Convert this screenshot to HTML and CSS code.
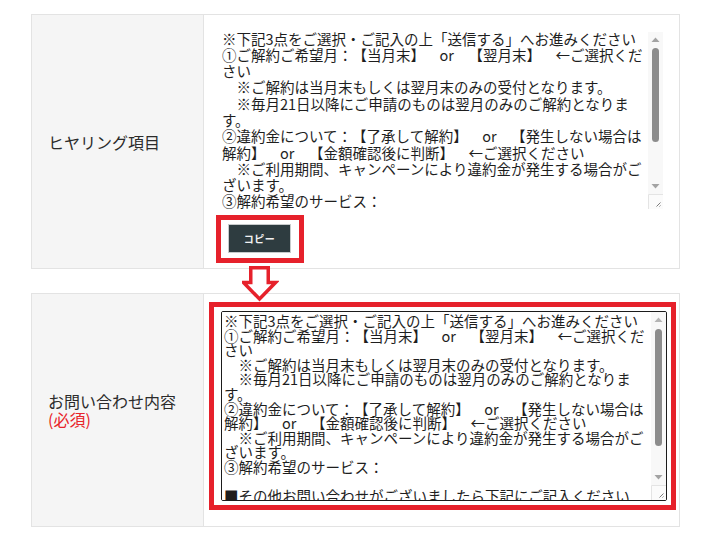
FILE: index.html
```html
<!DOCTYPE html>
<html lang="ja">
<head>
<meta charset="utf-8">
<title>お問い合わせ</title>
<link rel="stylesheet" href="styles.css">
</head>
<body>
<div class="page">
  <div class="form-row row-hearing">
    <div class="label-cell"><span class="label-text">ヒヤリング項目</span></div>
    <div class="value-cell">
      <div class="field field-source">
        <textarea class="ta ta-source" readonly>※下記3点をご選択・ご記入の上「送信する」へお進みください
①ご解約ご希望月：【当月末】　or　【翌月末】　←ご選択くだ
さい
　※ご解約は当月末もしくは翌月末のみの受付となります。
　※毎月21日以降にご申請のものは翌月のみのご解約となりま
す。
②違約金について：【了承して解約】　or　【発生しない場合は
解約】　or　【金額確認後に判断】　←ご選択ください
　※ご利用期間、キャンペーンにより違約金が発生する場合がご
ざいます。
③解約希望のサービス：

■その他お問い合わせがございましたら下記にご記入ください
</textarea>
        <div class="vscroll" aria-hidden="true">
          <span class="sb-btn"><svg width="15" height="15" viewBox="0 0 15 15"><path d="M3.5 10H11.5L7.5 5.5Z" fill="#a3a3a3"/></svg></span>
          <span class="sb-track"><span class="sb-thumb thumb-source"></span></span>
          <span class="sb-btn"><svg width="15" height="15" viewBox="0 0 15 15"><path d="M3.5 5H11.5L7.5 9.5Z" fill="#a3a3a3"/></svg></span>
          <span class="sb-corner"><svg width="15" height="15" viewBox="0 0 15 15"><path d="M0.5 15V0.5H15" fill="none" stroke="#e4e4e4"/><path d="M12.5 8.5L8.5 12.5M12.5 11.5L11.5 12.5" stroke="#7c7c7c" fill="none"/></svg></span>
        </div>
      </div>
      <div class="mark mark-button"><button class="copy-btn" type="button">コピー</button></div>
    </div>
  </div>

  <div class="form-row row-inquiry">
    <div class="label-cell">
      <div class="label-stack">
        <span class="label-text">お問い合わせ内容</span>
        <span class="req">(必須)</span>
      </div>
    </div>
    <div class="value-cell">
      <div class="mark mark-field">
        <div class="field field-target">
          <textarea class="ta ta-target">※下記3点をご選択・ご記入の上「送信する」へお進みください
①ご解約ご希望月：【当月末】　or　【翌月末】　←ご選択くだ
さい
　※ご解約は当月末もしくは翌月末のみの受付となります。
　※毎月21日以降にご申請のものは翌月のみのご解約となりま
す。
②違約金について：【了承して解約】　or　【発生しない場合は
解約】　or　【金額確認後に判断】　←ご選択ください
　※ご利用期間、キャンペーンにより違約金が発生する場合がご
ざいます。
③解約希望のサービス：

■その他お問い合わせがございましたら下記にご記入ください
</textarea>
          <div class="vscroll" aria-hidden="true">
            <span class="sb-btn"><svg width="15" height="15" viewBox="0 0 15 15"><path d="M3.5 10H11.5L7.5 5.5Z" fill="#b4b4b4"/></svg></span>
            <span class="sb-track"><span class="sb-thumb thumb-target"></span></span>
            <span class="sb-btn"><svg width="15" height="15" viewBox="0 0 15 15"><path d="M3.5 5H11.5L7.5 9.5Z" fill="#a3a3a3"/></svg></span>
            <span class="sb-corner"><svg width="15" height="15" viewBox="0 0 15 15"><path d="M0.5 15V0.5H15" fill="none" stroke="#e4e4e4"/><path d="M12.5 8.5L8.5 12.5M12.5 11.5L11.5 12.5" stroke="#7c7c7c" fill="none"/></svg></span>
          </div>
        </div>
      </div>
    </div>
  </div>

  <svg class="down-arrow" width="37" height="37" viewBox="0 0 37 37" aria-hidden="true">
    <polygon points="8.75,1.75 26.25,1.75 26.25,16.5 33.5,16.5 17.5,33 1.5,16.5 8.75,16.5" fill="#ffffff" stroke="#e6212b" stroke-width="3.5" stroke-linejoin="miter"/>
  </svg>
</div>
</body>
</html>
```

FILE: styles.css
```css
html, body {
  margin: 0;
  padding: 0;
  background: #ffffff;
}

.page {
  position: relative;
  padding: 14px 0 0 31px;
  font-family: "Noto Sans CJK JP", "Noto Sans", sans-serif;
  color: #2b2b2b;
  text-spacing-trim: space-all;
}

.form-row {
  display: grid;
  grid-template-columns: 172px 475px;
  width: 649px;
  box-sizing: border-box;
  border: 1px solid #e3e3e3;
}

.row-inquiry {
  margin-top: 24px;
}

.label-cell {
  display: flex;
  align-items: center;
  padding-left: 16px;
  background: #f5f5f5;
  border-right: 1px solid #e3e3e3;
  font-size: 16px;
  line-height: 18px;
}

.label-stack {
  display: flex;
  flex-direction: column;
}

.req {
  color: #e8242a;
}

.row-hearing .value-cell {
  padding: 17px 0 5px 12px;
}

.row-inquiry .value-cell {
  padding: 8px 0 16px 5px;
}

.mark {
  width: fit-content;
  border: 5px solid #e6212b;
}

.mark-button {
  margin-top: 6px;
  padding: 4px 8px 5px 7px;
}

.mark-field {
  padding: 4px 4px 4px 7px;
}

.copy-btn {
  display: block;
  width: 63px;
  height: 29px;
  padding: 0;
  margin: 0;
  background: #2e3c40;
  border: 1px solid #c7cbcc;
  color: #f2f2f2;
  font-family: "Noto Sans CJK JP", sans-serif;
  font-size: 10px;
  font-weight: 700;
  letter-spacing: 0.5px;
}

/* textarea + drawn scrollbar */
.field {
  display: flex;
  box-sizing: border-box;
  overflow: hidden;
  background: #ffffff;
}

.field-source {
  margin-left: 4px;
  width: 443px;
  height: 177px;
}

.field-target {
  width: 446px;
  height: 190px;
  border: 1px solid #1b1b1b;
  border-radius: 2px;
}

.ta {
  display: block;
  flex: 1;
  min-width: 0;
  box-sizing: border-box;
  margin: 0;
  border: 0;
  font-family: "Noto Sans CJK JP", "Noto Sans", sans-serif;
  font-size: 14.5px;
  color: #1e1e1e;
  background: #ffffff;
  overflow: hidden;
  outline: none;
  resize: none;
  text-spacing-trim: space-all;
}

.ta-source {
  margin-top: -1.5px;
  height: calc(100% + 1.5px);
  padding: 0 2px;
  line-height: 16.3px;
}

.ta-target {
  height: 100%;
  padding: 2px 2px 0 2px;
  line-height: 14.6px;
}

.vscroll {
  display: flex;
  flex-direction: column;
  width: 15px;
  flex: none;
  background: #f8f8f8;
}

.sb-btn,
.sb-corner {
  display: block;
  width: 15px;
  height: 15px;
  flex: none;
}

.sb-btn svg,
.sb-corner svg {
  display: block;
}

.sb-corner {
  background: #fbfbfb;
}

.sb-track {
  display: block;
  flex: 1;
}

.sb-thumb {
  display: block;
  width: 7px;
  margin: 0 4px;
  border-radius: 3.5px;
  background: #8c8c8c;
}

.thumb-source {
  margin-top: 1px;
  height: 94px;
}

.thumb-target {
  margin-top: 2px;
  height: 117px;
}

.down-arrow {
  position: absolute;
  left: 242px;
  top: 266px;
  display: block;
}
```
